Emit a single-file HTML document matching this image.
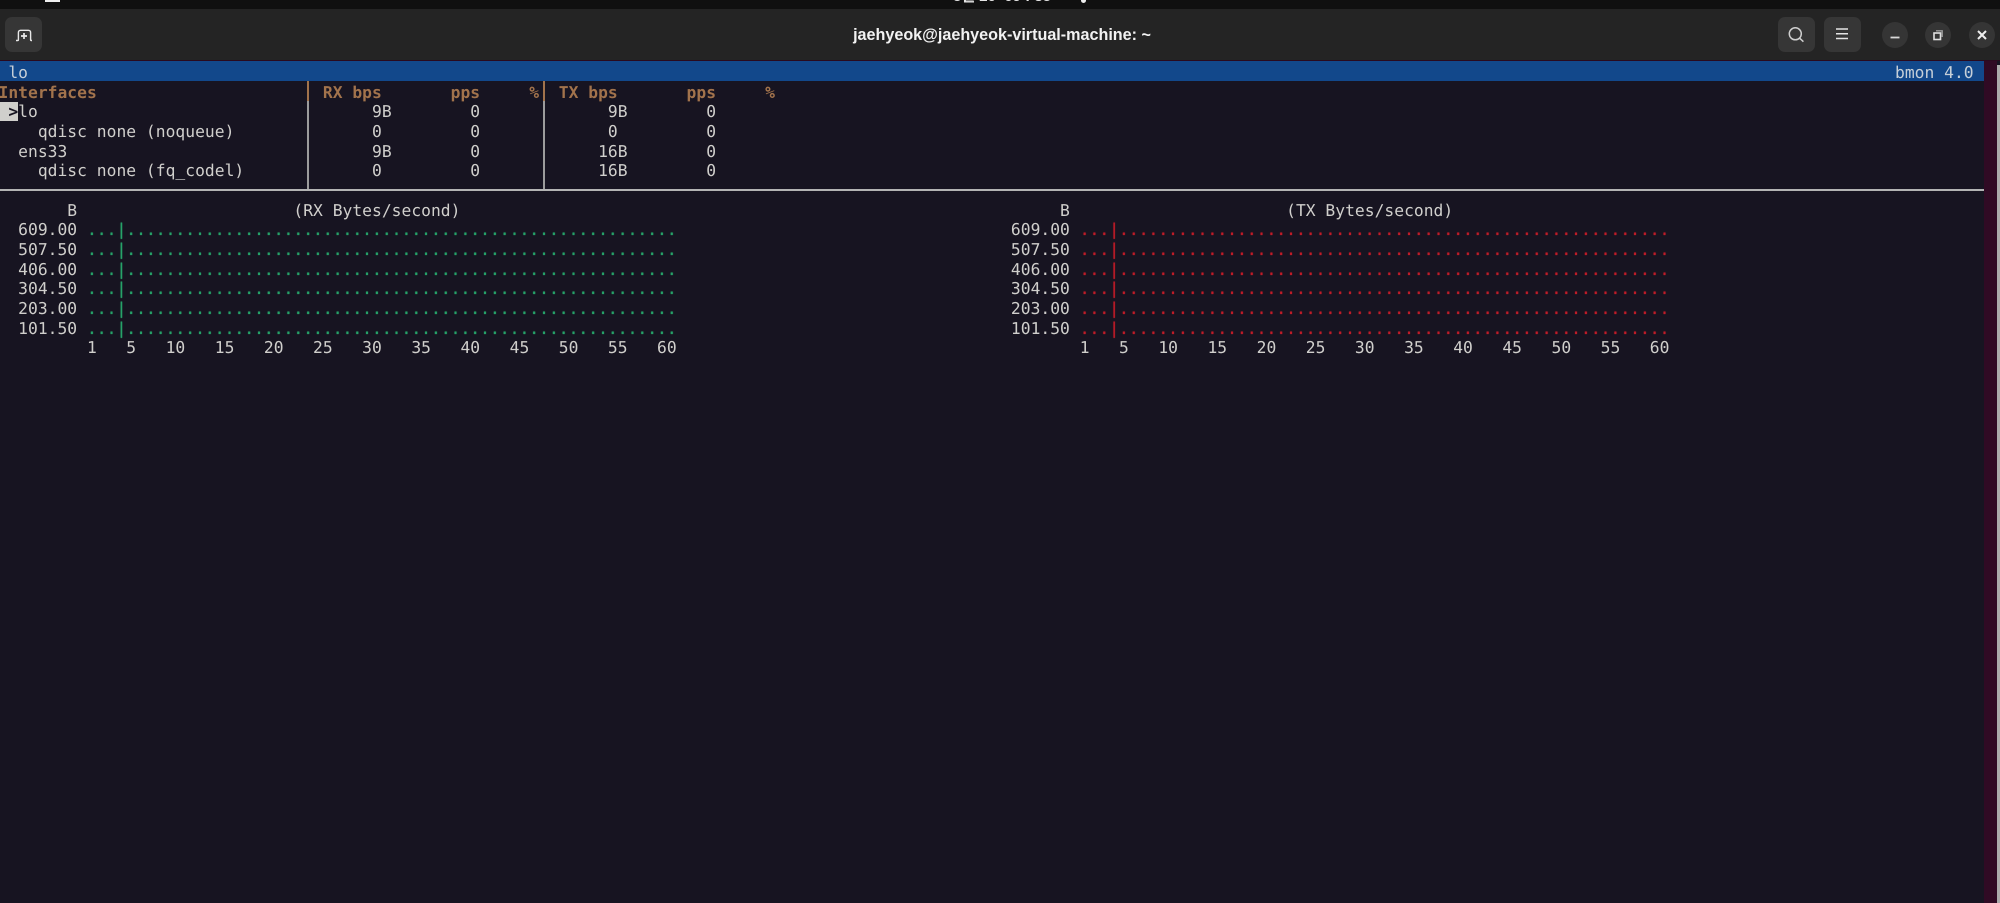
<!DOCTYPE html>
<html><head><meta charset="utf-8"><title>bmon</title>
<style>
html,body{margin:0;padding:0;background:#171421;width:2000px;height:903px;overflow:hidden}
#top{position:absolute;left:0;top:0;width:2000px;height:9px;background:#101010;overflow:hidden}
#clock{position:absolute;left:953px;top:-12px;font:bold 15px/18px "Liberation Sans","Noto Sans CJK KR",sans-serif;color:#e6e6e6;white-space:pre}
#bar{position:absolute;left:0;top:9px;width:2000px;height:51px;background:#242424}
#line{position:absolute;left:0;top:60px;width:2000px;height:1px;background:#2a0a1e}
#title{position:absolute;left:853px;top:24px;width:298px;text-align:center;font:bold 16.15px/22px "Liberation Sans",sans-serif;color:#f2f2f2;white-space:pre;filter:blur(.25px)}
.btn{position:absolute;top:17px;width:37px;height:35px;background:#363636;border-radius:7px}
.cir{position:absolute;top:22px;width:26px;height:26px;background:#353535;border-radius:50%}
svg{position:absolute;overflow:visible}
#term{position:absolute;left:0;top:61px;width:1984px;height:842px;background:#171421;overflow:hidden}
#blue{position:absolute;left:0;top:0;width:1984px;height:20px;background:#12488b}
#purple{position:absolute;left:1984px;top:61px;width:13px;height:842px;background:#300a24}
#gray{position:absolute;left:1997px;top:65px;width:3px;height:838px;background:#ababab}
.r{position:absolute;left:-1.5px;margin:2.3px 0 0;font:16.3px/19.66px "DejaVu Sans Mono","Liberation Mono",monospace;letter-spacing:.027px;color:#d0cfcc;white-space:pre;text-rendering:geometricPrecision;height:19.66px;filter:blur(.3px)}
.b{color:#a2734c;font-weight:bold}
.h{background:#d0cfcc;color:#171421;font-weight:bold}
.g{color:#26a269;text-shadow:0 0 1px #26a269}.d{color:#c01c28;text-shadow:0 0 1px #c01c28}
.v{position:absolute;width:2px;background:#9c9c9c}
</style></head><body>
<div id="top"><div id="clock">8월 20  09 : 38</div>
<div style="position:absolute;left:45px;top:0;width:15px;height:2px;background:#eee"></div>
<div style="position:absolute;left:1081px;top:0;width:5px;height:3px;border-radius:0 0 3px 3px;background:#eee"></div></div>
<div id="bar"></div>
<div id="line"></div>
<div id="title">jaehyeok@jaehyeok-virtual-machine: ~</div>

<div class="btn" style="left:5px"></div>
<svg style="left:0;top:0" width="50" height="60" fill="none" stroke="#e8e8e8" stroke-width="1.4"><path d="M16 40.5h1.6c.5 0 .8-.3.8-.8V32.500c0-1.300.9-2.200 2.200-2.200h7.800c1.300 0 2.200.9 2.200 2.200v7.200c0 .5.3.8.8.8H32"/><path d="M24 33v6M21 36h6" stroke-width="1.700"/></svg>

<div class="btn" style="left:1778px"></div>
<svg style="left:1778px;top:17px" width="37" height="35" fill="none" stroke="#cfcfcf" stroke-width="1.500"><circle cx="17.300" cy="16.800" r="6"/><path d="M21.800 21.300l3.600 3.400"/></svg>
<div class="btn" style="left:1824px"></div>
<svg style="left:1824px;top:17px" width="37" height="35" fill="none" stroke="#e4e4e4" stroke-width="1.500"><path d="M12 12h12M12 16.800h12M12 21.500h12"/></svg>

<div class="cir" style="left:1882px"></div>
<svg style="left:1882px;top:22px" width="26" height="26" fill="none" stroke="#d8d8d8" stroke-width="1.800"><path d="M8.500 15.500h9"/></svg>
<div class="cir" style="left:1925px"></div>
<svg style="left:1925px;top:22px" width="26" height="26" fill="none" stroke="#e0e0e0" stroke-width="1.400"><rect x="9" y="11" width="6.500" height="6.500" stroke-width="1.600"/><path d="M11 8.800h6.200v6.200" stroke="#9a9a9a"/></svg>
<div class="cir" style="left:1969px"></div>
<svg style="left:1969px;top:22px" width="26" height="26" fill="none" stroke="#eeeeee" stroke-width="2"><path d="M9 9l8 8M17 9l-8 8"/></svg>

<div id="term">
<div id="blue"></div>
<pre class="r" style="top:-.4px;color:#c6cfd8"> lo</pre>
<pre class="r" style="top:-.4px;left:1895px;color:#c6cfd8">bmon 4.0</pre>
<pre class="r b" style="top:19.300px">Interfaces                       RX bps       pps     %  TX bps       pps     %</pre>
<pre class="r" style="top:38.900px"><span class="h"> &gt;</span>lo                                  9B        0             9B        0</pre>
<pre class="r" style="top:58.600px">    qdisc none (noqueue)              0         0             0         0</pre>
<pre class="r" style="top:78.300px">  ens33                               9B        0            16B        0</pre>
<pre class="r" style="top:97.900px">    qdisc none (fq_codel)             0         0            16B        0</pre>
<div class="v" style="left:307px;top:20px;height:20px;background:#a2734c"></div>
<div class="v" style="left:307px;top:40px;height:90px"></div>
<div class="v" style="left:543px;top:20px;height:20px;background:#a2734c"></div>
<div class="v" style="left:543px;top:40px;height:90px"></div>
<div style="position:absolute;left:0;top:128px;width:1984px;height:2px;background:#b4b4b4"></div>
<pre class="r" style="top:137.300px">       B                      (RX Bytes/second)                                                             B                      (TX Bytes/second)</pre>
<pre class="r" style="top:157px">  609.00 <span class="g">...|........................................................</span>                                  609.00 <span class="d">...|........................................................</span></pre>
<pre class="r" style="top:176.600px">  507.50 <span class="g">...|........................................................</span>                                  507.50 <span class="d">...|........................................................</span></pre>
<pre class="r" style="top:196.300px">  406.00 <span class="g">...|........................................................</span>                                  406.00 <span class="d">...|........................................................</span></pre>
<pre class="r" style="top:215.900px">  304.50 <span class="g">...|........................................................</span>                                  304.50 <span class="d">...|........................................................</span></pre>
<pre class="r" style="top:235.600px">  203.00 <span class="g">...|........................................................</span>                                  203.00 <span class="d">...|........................................................</span></pre>
<pre class="r" style="top:255.300px">  101.50 <span class="g">...|........................................................</span>                                  101.50 <span class="d">...|........................................................</span></pre>
<pre class="r" style="top:274.900px">         1   5   10   15   20   25   30   35   40   45   50   55   60                                         1   5   10   15   20   25   30   35   40   45   50   55   60</pre>
</div>
<div id="purple"></div>
<div id="gray"></div>
</body></html>
